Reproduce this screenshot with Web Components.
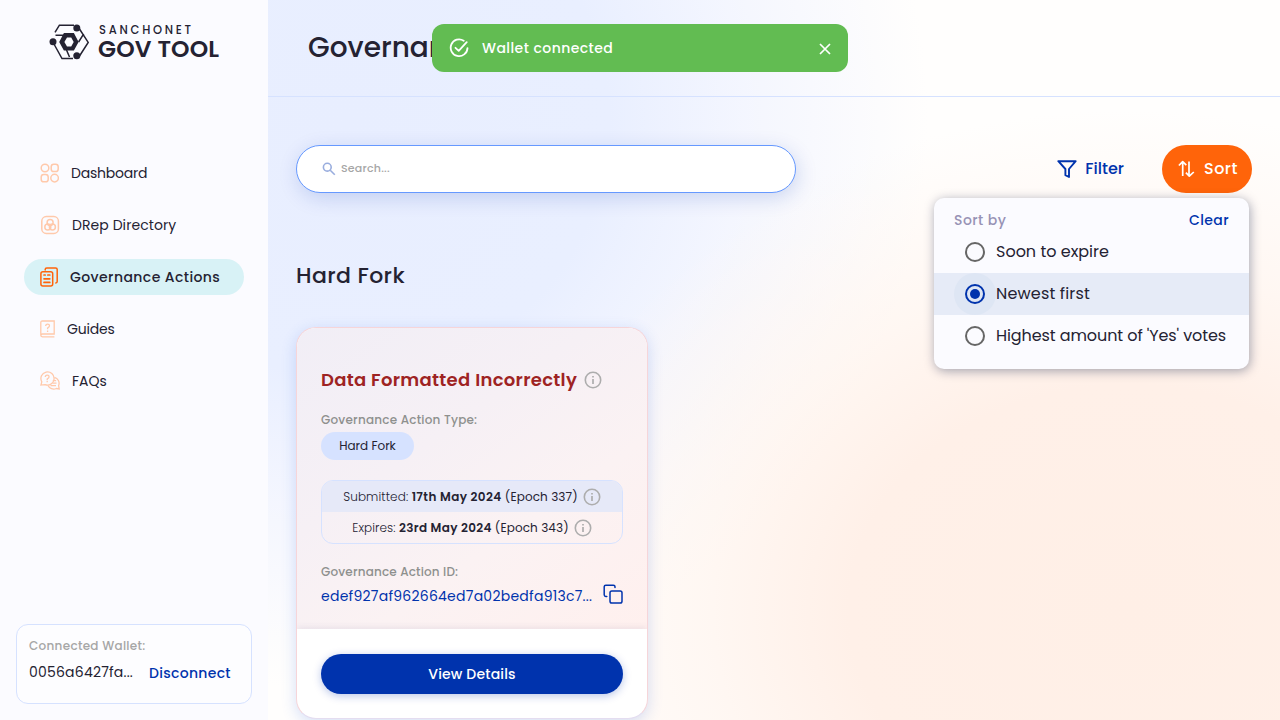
<!DOCTYPE html>
<html lang="en">
<head>
<meta charset="utf-8">
<title>SanchoNet GovTool</title>
<style>
html,body{margin:0;height:100%;overflow:hidden}
body{font-family:Poppins,Inter,"Open Sans",sans-serif;color:#242232}
</style>
</head>
<body>
<gov-app></gov-app>
<script>
const define = (name, html, setup) => {
  const t = document.createElement('template');
  t.innerHTML = html;
  customElements.define(name, class extends HTMLElement {
    constructor() {
      super();
      this.attachShadow({ mode: 'open' }).append(t.content.cloneNode(true));
    }
    connectedCallback() { if (setup) setup(this, this.shadowRoot); }
  });
};

// Single line of text; "grow" is the extra width in px shared between its letters
define('track-text', `<style>:host{display:block;white-space:pre;flex:none}</style><slot></slot>`, el => {
  const grow = +el.getAttribute('grow');
  if (grow) el.style.letterSpacing = (grow / el.textContent.length).toFixed(3) + 'px';
});

const ICONS = {
  dashboard: [19, 20, `<g stroke="#FFC9AB" stroke-width="1.5"><circle cx="5" cy="5" r="3.8"/><rect x="11.2" y="1.2" width="7" height="7.4" rx="2.6"/><rect x="1.2" y="11.4" width="7" height="7.4" rx="2.6"/><circle cx="14.6" cy="15.1" r="3.8"/></g>`],
  drep: [20, 20, `<g stroke="#FFC9AB" stroke-width="1.5"><rect x="1.8" y="1.6" width="16.6" height="16.8" rx="4.5"/><circle cx="10.1" cy="7.6" r="3"/><circle cx="7.8" cy="12" r="3"/><circle cx="12.4" cy="12" r="3"/></g>`],
  actions: [18, 20, `<g stroke="#FF640A" stroke-width="1.5" stroke-linecap="round"><path d="M5.2 2.9V2.4Q5.2.9 6.8.9H15.6Q17.2.9 17.2 2.5V14.6Q17.2 16 15.8 16"/><rect x=".9" y="4.8" width="11.8" height="14.2" rx="2"/><path d="M4 8h1.2M7.8 8h2M4 11.8h5.8M4 15.4h5.8" stroke-width="1.7"/></g>`],
  guides: [15, 18, `<g stroke="#FFC9AB" stroke-width="1.3"><path d="M.8 14.9V2.6Q.8 1 2.4 1H14.2V14H2.4Q.8 14 .8 15.3T2.4 16.8H14.4"/><path d="M5.7 6q0-1.9 1.9-1.9T9.5 5.8Q9.5 7 7.6 8v1.3M7.6 10.6v1.3"/></g>`],
  faqs: [20, 20, `<g stroke="#FFC9AB" stroke-width="1.3"><path d="M.9 14.1 1.8 10.8A6.6 6.6 0 1 1 5 13.6Z"/><path d="M5.3 6q0-1.9 1.9-1.9T9.1 5.8Q9.1 7 7.2 8v1.2M7.2 10v1.2"/><path d="M14.4 6.4A6 6 0 0 1 18.6 14.6L19.2 18 16.3 17.5A6.2 6.2 0 0 1 8 14.5M12.8 9.6h3.3M12.3 12.2h4.2M10.5 14.7h5.5"/></g>`],
  check: [20, 20, `<g stroke="#fff" stroke-width="1.8" stroke-linecap="round" stroke-linejoin="round" transform="translate(.5 .5)"><path d="M14.2 2.2A8.4 8.4 0 1 0 18 9.6M6 9.3 9.2 12.3 17.2 3.7"/></g>`],
  close: [12, 12, `<path d="M1 1 11 11M11 1 1 11" stroke="#fff" stroke-width="1.7"/>`],
  search: [14, 14, `<g stroke="#99ADDE" stroke-width="1.6"><circle cx="5.3" cy="5.2" r="3.9"/><path d="M8.2 8.2 12.8 12.8"/></g>`],
  filter: [20, 20, `<path d="M1.3 2.2H18.7L12 10V18L8.4 16.2V10Z" stroke="#0033AD" stroke-width="1.9" stroke-linejoin="round"/>`],
  sort: [18, 18, `<path d="M.9 5.5 4.7 1.7 8.3 5.2M4.7 1.9V16M11 1.4V16.2M7.9 12.7 11.3 16.2 15.8 12" stroke="#fff" stroke-width="1.7" stroke-linejoin="round"/>`],
  info: [18, 18, `<circle cx="9" cy="9" r="7.7" stroke="#ADADAD" stroke-width="1.6"/><path d="M9 8v5.1M9 5v1.6" stroke="#ADADAD" stroke-width="1.7"/>`],
  copy: [20, 20, `<g stroke="#0033AD" stroke-width="1.5" stroke-linejoin="round" stroke-linecap="round"><rect x="7" y="7" width="12" height="12" rx="1.8"/><path d="M3.8 12.4H2.8Q1.2 12.4 1.2 10.8V2.8Q1.2 1.2 2.8 1.2H10.4Q12 1.2 12 2.8V3.6"/></g>`],
};
define('ui-icon', `<style>:host{display:block;flex:none}svg{display:block}</style>`, (el, root) => {
  const [w, h, body] = ICONS[el.getAttribute('name')];
  root.innerHTML += `<svg width="${w}" height="${h}" viewBox="0 0 ${w} ${h}" fill="none">${body}</svg>`;
});

define('gov-logo', `<style>
:host{display:flex;gap:8px;height:36px}
svg{display:block}
.words{display:flex;flex-direction:column}
.top{font-size:11.5px;font-weight:500;line-height:12px;letter-spacing:2.75px;padding-left:1px}
.bot{font-size:23.5px;font-weight:600;line-height:26px;letter-spacing:.15px}
</style>
<svg width="41" height="36" viewBox="0 0 41 36" fill="none">
<g stroke="#242232" stroke-width="1.5"><path d="M6 8.4 10.4 1.2H25M4.4 19 13 34.6H24M30.5 5 39.2 18.4 30.5 32M6.5 11.2H16M17.5 26 20.5 33M34.7 9.8 29.6 18"/></g>
<path d="M14.9 9H24.9L29.6 18 24.9 26.6H14.9L10.2 18ZM18 13.4 15.4 18 18 22.4H22.2L24.7 18 22.2 13.4Z" fill="#242232" fill-rule="evenodd"/>
<g fill="#242232"><circle cx="27.8" cy="4" r="3.5"/><circle cx="4" cy="17.8" r="3.5"/><circle cx="27.8" cy="31.8" r="3.5"/></g>
</svg>
<div class="words"><track-text class="top">SANCHONET</track-text><track-text class="bot">GOV TOOL</track-text></div>`);

define('nav-item', `<style>
:host{display:flex;align-items:center;gap:12px;height:36px;padding-left:16px;border-radius:18px;font-size:14px;line-height:20px}
:host([active]){background:#D8F2F6;font-weight:500}
</style><slot name="icon"></slot><slot></slot>`);

define('wallet-card', `<style>
:host{display:block;box-sizing:border-box;height:80px;border:1px solid #D6E2FF;border-radius:12px;background:#FDFDFF;padding:12px}
.label{font-size:12px;font-weight:500;line-height:18px;color:#A6A6A6}
.row{display:flex;gap:16px;align-items:center;margin-top:7px;font-size:14px;line-height:20px}
.out{color:#0033AD;font-weight:500;position:relative;top:1px}
</style>
<track-text class="label" grow="5">Connected Wallet:</track-text>
<div class="row"><track-text grow="3">0056a6427fa...</track-text><track-text class="out" grow="3">Disconnect</track-text></div>`);

define('side-bar', `<style>
:host{display:flex;flex-direction:column;box-sizing:border-box;width:268px;height:720px;background:#FBFBFF;padding:24px 16px 16px}
gov-logo{margin-left:33px}
nav{display:flex;flex-direction:column;gap:16px;margin:95px 8px auto}
</style>
<gov-logo></gov-logo>
<nav>
<nav-item><ui-icon slot="icon" name="dashboard"></ui-icon><track-text grow="-2">Dashboard</track-text></nav-item>
<nav-item><ui-icon slot="icon" name="drep"></ui-icon><track-text grow="1">DRep Directory</track-text></nav-item>
<nav-item active><ui-icon slot="icon" name="actions"></ui-icon><track-text grow="7.5">Governance Actions</track-text></nav-item>
<nav-item><ui-icon slot="icon" name="guides"></ui-icon><track-text grow="-1">Guides</track-text></nav-item>
<nav-item><ui-icon slot="icon" name="faqs"></ui-icon><track-text>FAQs</track-text></nav-item>
</nav>
<wallet-card></wallet-card>`);

define('search-field', `<style>
:host{display:flex;align-items:center;gap:5px;box-sizing:border-box;width:500px;height:48px;border:1px solid #6699FF;border-radius:24px;background:#fff;padding-left:25px;box-shadow:2px 5px 20px rgba(0,51,173,.17);font-size:11px;font-weight:500;line-height:16px;color:#A6A6A6}
track-text{position:relative;top:-1px}
</style><ui-icon name="search"></ui-icon><track-text grow="2">Search...</track-text>`);

define('radio-row', `<style>
:host{display:flex;align-items:center;height:42px;padding-left:20px;font-size:16px;line-height:24px}
.halo{display:grid;place-items:center;width:42px;height:42px;border-radius:50%}
.ring{display:grid;place-items:center;box-sizing:border-box;width:20px;height:20px;border:2px solid #666;border-radius:50%}
:host([checked]){background:#E6EBF7}
:host([checked]) .halo{background:#DEE6F4}
:host([checked]) .ring{border-color:#0033AD}
:host([checked]) .ring::after{content:"";width:10px;height:10px;border-radius:50%;background:#0033AD}
</style><span class="halo"><span class="ring"></span></span><slot></slot>`);

define('sort-menu', `<style>
:host{display:block;box-sizing:border-box;width:315px;height:171px;border-radius:10px;background:#FBFBFF;box-shadow:1px 2px 11px rgba(0,18,61,.37);padding-top:12px}
.head{display:flex;justify-content:space-between;padding:0 20px;font-size:14px;font-weight:500;line-height:21px;height:21px}
.by{color:#9792B5}.clear{color:#0033AD}
</style>
<div class="head"><track-text class="by" grow="3">Sort by</track-text><track-text class="clear" grow="2">Clear</track-text></div>
<radio-row><track-text>Soon to expire</track-text></radio-row>
<radio-row checked><track-text grow="2">Newest first</track-text></radio-row>
<radio-row><track-text grow="-2.5">Highest amount of 'Yes' votes</track-text></radio-row>`);

define('tool-bar', `<style>
:host{display:flex;align-items:center;height:48px}
.filter,.sort{display:flex;align-items:center;gap:8px;font-size:16px;font-weight:500;line-height:24px}
.filter{color:#0033AD;margin-left:auto;margin-right:38px}
.sort{position:relative;box-sizing:border-box;width:90px;height:48px;border-radius:24px;background:#FF640A;color:#fff;padding-left:16px}
sort-menu{position:absolute;top:53px;right:3px;color:#242232;font-weight:400;z-index:2}
</style>
<search-field></search-field>
<div class="filter"><ui-icon name="filter"></ui-icon><track-text>Filter</track-text></div>
<div class="sort"><ui-icon name="sort"></ui-icon><track-text grow="2">Sort</track-text><sort-menu></sort-menu></div>`);

define('date-row', `<style>
:host{display:flex;align-items:center;justify-content:center;gap:5px;height:31px;font-size:12px;line-height:18px}
:host([tinted]){background:#E6E9F8}
.t{display:flex}
</style><div class="t"><slot></slot></div><ui-icon name="info"></ui-icon>`);

define('action-card', `<style>
:host{display:flex;flex-direction:column;box-sizing:border-box;width:352px;height:392px;border:1px solid #F6D5D9;border-bottom-color:#E4DDF0;border-radius:20px;overflow:hidden;box-shadow:0 4px 15px rgba(47,98,220,.2);background:#fff}
.body{box-sizing:border-box;height:301px;padding:39px 24px 0;background:linear-gradient(145deg,#F1EEF6 0%,#F6F0F5 38%,#FBF2F3 65%,#FFF0EE 100%)}
.title{display:flex;align-items:center;gap:7px;height:26px;font-size:18px;font-weight:600;line-height:26px;color:#9E2323}
.label{font-size:12px;font-weight:500;line-height:18px;color:#8E908E}
.l1{margin-top:18px}
.chip{display:flex;align-items:center;justify-content:center;width:93px;height:28px;margin-top:3px;border-radius:14px;background:#D6E2FF;font-size:12px;line-height:18px}
.dates{box-sizing:border-box;height:64px;margin-top:20px;border:1px solid #D6E2FF;border-radius:12px;overflow:hidden}
.light{font-weight:300}.bold{font-weight:600}
.l2{margin-top:19px}
.id{display:flex;align-items:center;justify-content:space-between;margin-top:3px;height:24px;font-size:14px;line-height:24px;color:#0033AD}
.id ui-icon{position:relative;top:-2px}
.foot{flex:1;padding:25px 24px 0;box-shadow:0 -2px 6px rgba(80,80,130,.09)}
.btn{display:flex;align-items:center;justify-content:center;height:40px;border-radius:20px;background:#0033AD;color:#fff;font-size:14px;font-weight:500;line-height:20px;box-shadow:0 2px 8px rgba(0,51,173,.28)}
</style>
<div class="body">
<div class="title"><track-text grow="8">Data Formatted Incorrectly</track-text><ui-icon name="info"></ui-icon></div>
<track-text class="label l1" grow="5">Governance Action Type:</track-text>
<div class="chip"><track-text>Hard Fork</track-text></div>
<div class="dates">
<date-row tinted><track-text class="light" grow="1.2">Submitted: </track-text><track-text class="bold" grow="5.5">17th May 2024 </track-text><track-text grow="1.2">(Epoch 337)</track-text></date-row>
<date-row><track-text class="light" grow="1">Expires: </track-text><track-text class="bold" grow="4.5">23rd May 2024 </track-text><track-text grow="1.2">(Epoch 343)</track-text></date-row>
</div>
<track-text class="label l2" grow="3.5">Governance Action ID:</track-text>
<div class="id"><track-text grow="8.5">edef927af962664ed7a02bedfa913c7...</track-text><ui-icon name="copy"></ui-icon></div>
</div>
<div class="foot"><div class="btn"><track-text grow="2">View Details</track-text></div></div>`);

define('toast-bar', `<style>
:host{display:flex;align-items:center;box-sizing:border-box;width:416px;height:48px;border-radius:12px;background:#62BC52;color:#fff;padding:0 17px;font-size:14px;font-weight:500;line-height:20px}
track-text{margin-left:13px}.x{margin-left:auto;position:relative;top:1px}
</style><ui-icon name="check"></ui-icon><track-text grow="7">Wallet connected</track-text><ui-icon class="x" name="close"></ui-icon>`);

define('gov-app', `<style>
:host{display:grid;grid-template-columns:268px 1fr;height:720px;position:relative;overflow:hidden}
main{min-width:0;background:
radial-gradient(ellipse 620px 500px at 860px 610px,#FFEFE6 0%,#FFF0E8 45%,rgba(255,245,239,.75) 68%,rgba(255,252,250,0) 100%),
radial-gradient(ellipse 580px 570px at 80px 120px,#E8EEFF 0%,#E9EFFF 45%,rgba(241,244,255,.8) 68%,rgba(255,255,255,0) 100%),#FFFEFD}
header{box-sizing:border-box;height:97px;padding:27px 40px 0;border-bottom:1px solid #D6E2FF;font-size:28px;font-weight:500;line-height:42px}
.content{padding:48px 28px 0}
h2{margin:66px 0 35px;font-size:22px;font-weight:500;line-height:33px}
toast-bar{position:absolute;left:432px;top:24px}
</style>
<side-bar></side-bar>
<main>
<header><track-text>Governance Actions</track-text></header>
<div class="content"><tool-bar></tool-bar><h2><track-text grow="3.5">Hard Fork</track-text></h2><action-card></action-card></div>
</main>
<toast-bar></toast-bar>`);
</script>
</body>
</html>
